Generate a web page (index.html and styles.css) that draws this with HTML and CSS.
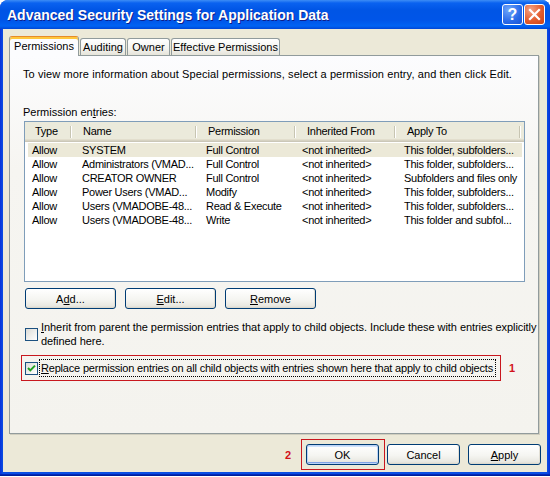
FILE: index.html
```html
<!DOCTYPE html>
<html>
<head>
<meta charset="utf-8">
<link rel="stylesheet" href="styles.css">
</head>
<body>
<div class="window">
  <div class="titlebar">
    <span class="title">Advanced Security Settings for Application Data</span>
    <div class="caption-btns">
      <span class="cbtn help">?</span>
      <span class="cbtn close"><svg width="13" height="13" viewBox="0 0 13 13"><path d="M2 2 L11 11 M11 2 L2 11" stroke="#fff" stroke-width="2.2" stroke-linecap="square"/></svg></span>
    </div>
  </div>
  <div class="client">
    <div class="tabs">
      <span class="tab sel">Permissions</span>
      <span class="tab t-aud">Auditing</span>
      <span class="tab t-own">Owner</span>
      <span class="tab t-eff">Effective Permissions</span>
    </div>
    <div class="panel">
      <p class="intro">To view more information about Special permissions, select a permission entry, and then click Edit.</p>
      <p class="label">Permission en<u>t</u>ries:</p>
      <div class="list">
        <div class="lv-head">
          <span class="hc">Type</span>
          <span class="hc">Name</span>
          <span class="hc">Permission</span>
          <span class="hc">Inherited From</span>
          <span class="hc">Apply To</span>
        </div>
        <div class="lv-row sel-row">
          <span class="c1">Allow</span><span class="c2">SYSTEM</span><span class="c3">Full Control</span><span class="c4">&lt;not inherited&gt;</span><span class="c5">This folder, subfolders...</span>
        </div>
        <div class="lv-row">
          <span class="c1">Allow</span><span class="c2">Administrators (VMAD...</span><span class="c3">Full Control</span><span class="c4">&lt;not inherited&gt;</span><span class="c5">This folder, subfolders...</span>
        </div>
        <div class="lv-row">
          <span class="c1">Allow</span><span class="c2">CREATOR OWNER</span><span class="c3">Full Control</span><span class="c4">&lt;not inherited&gt;</span><span class="c5">Subfolders and files only</span>
        </div>
        <div class="lv-row">
          <span class="c1">Allow</span><span class="c2">Power Users (VMAD...</span><span class="c3">Modify</span><span class="c4">&lt;not inherited&gt;</span><span class="c5">This folder, subfolders...</span>
        </div>
        <div class="lv-row">
          <span class="c1">Allow</span><span class="c2">Users (VMADOBE-48...</span><span class="c3">Read &amp; Execute</span><span class="c4">&lt;not inherited&gt;</span><span class="c5">This folder, subfolders...</span>
        </div>
        <div class="lv-row">
          <span class="c1">Allow</span><span class="c2">Users (VMADOBE-48...</span><span class="c3">Write</span><span class="c4">&lt;not inherited&gt;</span><span class="c5">This folder and subfol...</span>
        </div>
      </div>
      <div class="btn-row">
        <button class="btn w90">A<u>d</u>d...</button>
        <button class="btn w90"><u>E</u>dit...</button>
        <button class="btn w90"><u>R</u>emove</button>
      </div>
      <div class="chk-row">
        <span class="cb"></span>
        <span class="chk-text"><u>I</u>nherit from parent the permission entries that apply to child objects. Include these with entries explicitly<br>defined here.</span>
      </div>
      <div class="hl-row">
        <div class="hl">
          <span class="cb checked"><svg width="11" height="11" viewBox="0 0 11 11"><path d="M2 5 L4.3 7.4 L9 2.6" fill="none" stroke="#21A121" stroke-width="2"/></svg></span>
          <span class="focus"><u>R</u>eplace permission entries on all child objects with entries shown here that apply to child objects</span>
        </div>
        <span class="mark m1">1</span>
      </div>
    </div>
    <div class="footer">
      <span class="mark m2">2</span>
      <div class="hl2">
        <button class="btn w73 def">OK</button>
      </div>
      <button class="btn w73 cancel">Cancel</button>
      <button class="btn w73 apply"><u>A</u>pply</button>
    </div>
  </div>
</div>
</body>
</html>
```

FILE: styles.css
```css
* { box-sizing: border-box; }
html, body { margin: 0; padding: 0; background: #ffffff; }
body {
  font-family: "Liberation Sans", Arial, sans-serif;
  font-size: 11px;
  color: #000;
}
p { margin: 0; }
u { text-decoration: underline; text-underline-offset: 1px; }

.window {
  width: 550px;
  height: 476px;
  background: linear-gradient(90deg, #0831D9 0, #0A4EE4 3px, #0A4EE4 547px, #0831D9 550px);
  border-radius: 8px 8px 0 0;
  display: flex;
  flex-direction: column;
  overflow: hidden;
  box-shadow: inset 0 -1px #001E9C, inset 0 -2px #0029B8;
}

.titlebar {
  height: 29px;
  flex: none;
  display: flex;
  align-items: flex-start;
  padding: 0 5px 0 7px;
  background: linear-gradient(180deg, #3D8DF5 0, #0A62F0 3px, #0055E5 10px, #0055E8 20px, #0063F3 26px, #0046D6 29px);
}
.title {
  flex: 1;
  color: #fff;
  font-weight: bold;
  font-size: 14px;
  line-height: 16px;
  margin-top: 7px;
  text-shadow: 1px 1px #0F1E8A;
  white-space: nowrap;
}
.caption-btns {
  display: flex;
  gap: 1px;
  margin-top: 4px;
}
.cbtn {
  width: 21px;
  height: 21px;
  border: 1px solid #fff;
  border-radius: 3px;
  display: flex;
  align-items: center;
  justify-content: center;
}
.help {
  background: radial-gradient(circle at 30% 25%, #6FA7FB, #2A6AE8 60%, #1A53D4);
  color: #fff;
  font: bold 16px "Liberation Sans", Arial, sans-serif;
}
.close {
  background: radial-gradient(circle at 30% 25%, #F4A284, #E35D2E 55%, #CC4316);
}

.client {
  flex: 1;
  margin: 0 3px 4px 3px;
  background: #ECE9D8;
  padding: 7px 8px 0 6px;
  display: flex;
  flex-direction: column;
}

/* Tabs */
.tabs {
  display: flex;
  align-items: flex-end;
  height: 20px;
  margin-bottom: -1px;
  position: relative;
  z-index: 1;
  gap: 1px;
}
.tab {
  height: 17px;
  margin-bottom: 1px;
  border: 1px solid #919B9C;
  border-bottom: none;
  border-radius: 3px 3px 0 0;
  background: linear-gradient(#FFFFFF, #F3F3EF 60%, #E6E4DA);
  line-height: 16px;
  text-align: center;
  white-space: nowrap;
}
.tab.sel {
  height: 20px;
  margin-bottom: 0;
  width: 70px;
  border-top: 1px solid #E68B2C;
  box-shadow: inset 0 2px #FFC73C;
  background: #FCFCFE;
  line-height: 19px;
  padding-top: 0;
}
.t-aud { width: 46px; }
.t-own { width: 43px; }
.t-eff { width: 109px; }

/* Panel */
.panel {
  height: 379px;
  flex: none;
  border: 1px solid #919B9C;
  background: linear-gradient(#FCFCFE, #F6F5F1 30%, #F4F3EE);
  padding: 12px 0 0 13px;
  display: flex;
  flex-direction: column;
  align-items: flex-start;
  box-shadow: 1px 1px 0 #D0CEBF;
}
.intro { line-height: 13px; white-space: nowrap; letter-spacing: 0.1px; }
.label { line-height: 13px; margin-top: 25px; }

.list {
  margin: 2px 0 0 1px;
  width: 501px;
  height: 161px;
  border: 1px solid #7F9DB9;
  background: #fff;
  letter-spacing: -0.27px;
}
.lv-head {
  display: grid;
  grid-template-columns: 48px 125px 99px 100px 125px;
  height: 20px;
  background: #EBEADB;
  box-shadow: inset 0 -1px #CBC7B8, inset 0 -2px #D6D2C2, inset 0 -3px #E2DECD;
}
.hc {
  padding-left: 10px;
  line-height: 19px;
  background: linear-gradient(90deg, #C7C5B2 0 1px, #FFFFFF 1px 2px) no-repeat right 1px top 4px / 2px 12px;
  white-space: nowrap;
}
.lv-row {
  display: grid;
  grid-template-columns: 45px 125px 99px 100px 125px;
  height: 14px;
  line-height: 14px;
  margin-left: 3px;
  width: 494px;
  white-space: nowrap;
}
.lv-head + .lv-row { margin-top: 1px; }
.sel-row { background: #ECE9D8; }
.c1 { padding-left: 4px; }
.c2 { padding-left: 9px; }
.c3 { padding-left: 8px; }
.c4 { padding-left: 5px; }
.c5 { padding-left: 7px; }

/* Buttons */
.btn {
  height: 21px;
  padding: 0;
  border: 1px solid #003C74;
  border-radius: 3px;
  background: linear-gradient(#FFFFFF, #F5F5F1 55%, #E8E7E0 90%, #D8D4C8);
  box-shadow: inset -1px 0 #E2DFD5;
  font: 11px "Liberation Sans", Arial, sans-serif;
  color: #000;
  display: flex;
  align-items: center;
  justify-content: center;
}
.w90 { width: 91px; }
.w73 { width: 73px; }
.btn-row {
  display: flex;
  gap: 9px;
  margin: 6px 0 0 2px;
}
.btn.def {
  box-shadow: inset 0 0 0 1px #BCD4F6, inset 0 -2px #7FA2E6, inset 0 2px #CEE2FC;
}
.cancel { margin-left: 2px; }
.apply { margin-left: 8px; }

/* Checkboxes */
.chk-row {
  display: flex;
  align-items: center;
  margin: 11px 0 0 2px;
  line-height: 14px;
  white-space: nowrap;
  letter-spacing: -0.06px;
}
.cb {
  width: 13px;
  height: 13px;
  flex: none;
  border: 1px solid #1C5180;
  background: linear-gradient(135deg, #DCDCD7, #FFFFFF);
  margin-right: 3px;
  display: flex;
  align-items: center;
  justify-content: center;
}
.hl-row {
  display: flex;
  align-items: center;
  margin: 7px 0 0 -2px;
}
.hl {
  width: 480px;
  height: 26px;
  flex: none;
  border: 1px solid #C8171E;
  display: flex;
  align-items: center;
  padding-left: 3px;
}
.hl .cb { margin-right: 1px; }
.focus {
  border: 1px dotted #000;
  padding: 1px 0 1px 1px;
  line-height: 14px;
  width: 457px;
  flex: none;
  white-space: nowrap;
  letter-spacing: -0.19px;
  overflow: hidden;
}
.mark {
  color: #D2121A;
  font-size: 11px;
  font-weight: bold;
}
.m1 { margin-left: 8px; }

/* Footer */
.footer {
  display: flex;
  align-items: center;
  justify-content: flex-end;
  margin: 5px -2px 0 0;
}
.m2 { margin-right: 10px; }
.hl2 {
  width: 84px;
  height: 31px;
  border: 1px solid #C8171E;
  display: flex;
  align-items: center;
  padding-left: 4px;
}
```
